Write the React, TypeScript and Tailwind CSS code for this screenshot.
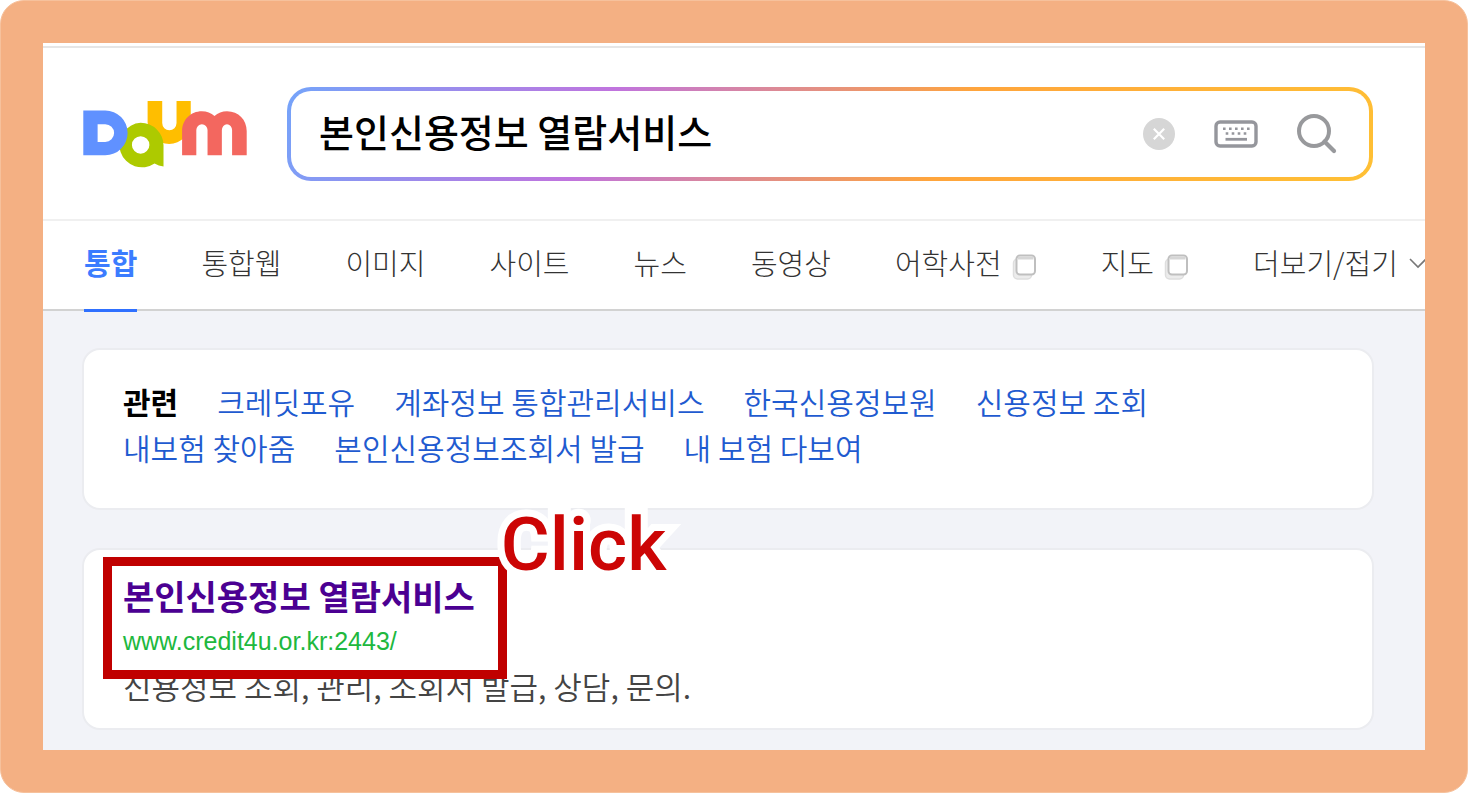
import { useState } from "react";

interface Tab {
  label: string;
  active?: boolean;
  external?: boolean;
}

const TABS: Tab[] = [
  { label: "통합", active: true },
  { label: "통합웹" },
  { label: "이미지" },
  { label: "사이트" },
  { label: "뉴스" },
  { label: "동영상" },
  { label: "어학사전", external: true },
  { label: "지도", external: true },
];

const RELATED = [
  "크레딧포유",
  "계좌정보 통합관리서비스",
  "한국신용정보원",
  "신용정보 조회",
  "내보험 찾아줌",
  "본인신용정보조회서 발급",
  "내 보험 다보여",
];

function Logo() {
  return (
    <svg width="164" height="68" viewBox="0 0 165 68" aria-hidden="true">
      <path
        fill="#ffbe00"
        d="M65 .8h14.7V23a7.2 7.2 0 0 0 14.4 0V.8h14.3V22.300a21.7 21.7 0 0 1-43.4 0z"
      />
      <path
        fill="#adca00"
        fillRule="evenodd"
        d="M58 22.800A23 22.600 0 0 1 81 45.400V66.600Q76 66.200 72 63.700A22.600 22.400 0 1 1 58 22.800zM58 36.200a8.800 8.800 0 1 0 0 17.600A8.800 8.800 0 0 0 58 36.200z"
      />
      <path
        fill="#6091ff"
        fillRule="evenodd"
        d="M.3 10.400H22.400a22.500 22.500 0 0 1 0 45H.3zM14.700 24.200V42H22.400a8.900 8.900 0 0 0 0-17.800z"
      />
      <path
        fill="#f3675f"
        d="M99.700 55.400V31C99.700 19.500 108.500 11 119.500 11c5 0 9.500 1.800 12.800 5 3.300-3.200 7.800-5 12.600-5 11.500 0 19.800 8.500 19.800 20V55.400H150V30a5.100 5.800 0 0 0-10.300 0V55.400h-14.400V30a5.600 5.800 0 0 0-11.300 0V55.400z"
      />
    </svg>
  );
}

function ClearIcon() {
  return (
    <svg width="32" height="32" viewBox="0 0 32 32" aria-hidden="true">
      <circle cx="16" cy="16" r="16" fill="#d6d6d6" />
      <path d="M10.800 10.800l10.400 10.400M21.200 10.800L10.800 21.200" stroke="#fff" strokeWidth="2.200" />
    </svg>
  );
}

function KeyboardIcon() {
  return (
    <svg width="44" height="28" viewBox="0 0 44 28" fill="none" stroke="#95969c" aria-hidden="true">
      <rect x="2" y="2" width="40" height="24" rx="4" strokeWidth="3.400" />
      <path d="M9 8.700h28" strokeWidth="2.600" strokeDasharray="2.600 3.400" />
      <path d="M11.700 13.500h22" strokeWidth="2.600" strokeDasharray="2.600 3.400" />
      <path d="M11.500 19.300h21.500" strokeWidth="2.800" />
    </svg>
  );
}

function SearchIcon() {
  return (
    <svg width="40" height="40" viewBox="0 0 40 40" fill="none" stroke="#98999c" aria-hidden="true">
      <circle cx="17" cy="17" r="15" strokeWidth="4" />
      <path d="M27.500 27.500l9.500 9.500" strokeWidth="4.200" strokeLinecap="round" />
    </svg>
  );
}

function WindowIcon() {
  return (
    <svg className="mt-2" width="25" height="28" viewBox="0 0 25 28" fill="none" aria-hidden="true">
      <rect x="1.500" y="6" width="18" height="20" rx="4" fill="#ececec" stroke="#dedede" strokeWidth="1.500" />
      <rect x="4.500" y="2.500" width="18.500" height="19" rx="3.500" fill="#fff" stroke="#bfbfbf" strokeWidth="2" />
      <path d="M6 5h15.500" stroke="#d6d6d6" strokeWidth="3" />
    </svg>
  );
}

function SearchBox() {
  const [query, setQuery] = useState("본인신용정보 열람서비스");

  return (
    <form
      className="flex-1 rounded-3xl bg-[linear-gradient(117deg,#74a4fa_0%,#c074de_29%,#ffa53c_61%,#ffc034_100%)] p-1"
      onSubmit={(e) => e.preventDefault()}
    >
      <div className="flex h-[86px] items-center gap-[39px] rounded-[20px] bg-white pr-8 pl-7">
        <input
          type="text"
          aria-label="검색어"
          value={query}
          onChange={(e) => setQuery(e.target.value)}
          className="min-w-0 flex-1 bg-transparent pb-2 text-[38px] font-medium text-black outline-none"
        />
        <button type="button" aria-label="지우기" onClick={() => setQuery("")}>
          <ClearIcon />
        </button>
        <button type="button" aria-label="키보드">
          <KeyboardIcon />
        </button>
        <button type="submit" aria-label="검색">
          <SearchIcon />
        </button>
      </div>
    </form>
  );
}

function TabBar() {
  return (
    <nav className="flex h-[90px] gap-16 border-b-2 border-[#d2d2d2] bg-white pl-[41px] text-[29px] font-light whitespace-nowrap text-[#333]">
      {TABS.map((tab) =>
        tab.active ? (
          <a key={tab.label} href="#" className="relative flex shrink-0 items-center pb-1 font-bold text-[#3b7cff]">
            {tab.label}
            <span className="absolute inset-x-0 -bottom-[3px] h-[3px] bg-[#2f70ff]" />
          </a>
        ) : (
          <a key={tab.label} href="#" className="flex shrink-0 items-center gap-2.5 pb-1">
            {tab.label}
            {tab.external && <WindowIcon />}
          </a>
        ),
      )}
      <button type="button" className="flex shrink-0 items-center gap-2.5 pb-1">
        더보기/접기
        <svg width="20" height="12" viewBox="0 0 20 12" fill="none" stroke="#777" strokeWidth="1.600" aria-hidden="true">
          <path d="M2 2l8 8 8-8" />
        </svg>
      </button>
    </nav>
  );
}

export default function App() {
  return (
    <div className="min-h-screen bg-white font-['Liberation_Sans','Noto_Sans_CJK_KR',sans-serif]">
      <div className="flex min-h-screen flex-col rounded-3xl border border-[#f6c19c] bg-[#f4b083] p-[42px]">
        <div className="flex-1 overflow-hidden bg-[#f2f3f8] font-['Noto_Sans_CJK_KR',sans-serif]">
          {/* Search header */}
          <header className="border-b-2 border-[#f0f0f0] bg-white pt-[3px]">
            <div className="flex items-center gap-10 border-t-2 border-[#e6e6e6] pt-[39px] pr-[52px] pb-[38px] pl-10">
              <a href="#" aria-label="Daum">
                <Logo />
              </a>
              <SearchBox />
            </div>
          </header>
          <TabBar />

          <main className="flex flex-col gap-[38px] pt-[37px] pr-[51px] pb-5 pl-[39px]">
            {/* Related searches */}
            <section className="rounded-[18px] border-2 border-[#ebecf0] bg-white px-[39px] pt-7 pb-[38px]">
              <div className="flex flex-wrap gap-x-[39px] text-3xl leading-[46px]">
                <h2 className="font-bold text-black">관련</h2>
                {RELATED.map((word) => (
                  <a key={word} href="#" className="font-[350] text-[#1f5bd0]">
                    {word}
                  </a>
                ))}
              </div>
            </section>

            {/* Result */}
            <article className="rounded-[18px] border-2 border-[#ebecf0] bg-white px-[39px] pt-[23px] pb-[19px]">
              <div className="relative w-fit">
                <h3 className="text-[34px] leading-[46px] font-bold">
                  <a href="#" className="text-[#4b0092]">
                    본인신용정보 열람서비스
                  </a>
                </h3>
                <a href="#" className="block font-['Liberation_Sans',sans-serif] text-[25px] leading-[44px] text-[#20b83e]">
                  www.credit4u.or.kr:2443/
                </a>
                <div className="pointer-events-none absolute -top-4 -right-8 -bottom-4 -left-5 z-10 border-[9px] border-[#c00000]">
                  <span className="absolute -top-[72px] left-full pl-[3px] font-[Roboto,sans-serif] text-[75px] leading-[100px] font-medium text-[#cc0505] [paint-order:stroke] [stroke-linejoin:round] [-webkit-text-stroke:14px_white]">
                    Click
                  </span>
                </div>
              </div>
              <p className="text-[31px] leading-[46px] font-[350] text-[#444]">신용정보 조회, 관리, 조회서 발급, 상담, 문의.</p>
            </article>
          </main>
        </div>
      </div>
    </div>
  );
}
